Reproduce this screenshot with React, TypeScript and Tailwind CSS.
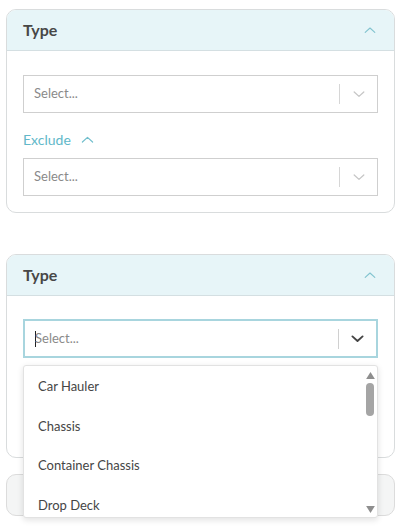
import React from "react";

const font = { fontFamily: "Lato, 'Open Sans', sans-serif" };

function ChevronDown({ className = "", strokeWidth = 1.6 }: { className?: string; strokeWidth?: number }) {
  return (
    <svg viewBox="0 0 20 20" className={className} fill="none" stroke="currentColor" strokeWidth={strokeWidth} strokeLinecap="round" strokeLinejoin="round">
      <path d="M4 7.5 L10 13 L16 7.5" />
    </svg>
  );
}

function ChevronUp({ className = "" }: { className?: string }) {
  return (
    <svg viewBox="0 0 20 20" className={className} fill="none" stroke="currentColor" strokeWidth={1.4} strokeLinecap="round" strokeLinejoin="round">
      <path d="M4 13 L10 7.5 L16 13" />
    </svg>
  );
}

function Select({ focused = false }: { focused?: boolean }) {
  return (
    <div
      className={
        "flex items-center bg-white " +
        (focused ? "h-[39px] border-2 border-[#a8d5de]" : "h-[38px] border border-[#cfcfcf]")
      }
    >
      <div className="flex-1 flex items-center pl-[10px] text-[13px] text-[#8a8a8a]">
        {focused && <span className="w-px h-[16px] bg-[#222] -mr-px" />}
        <span>Select...</span>
      </div>
      <div className={"w-px h-[20px] " + (focused ? "bg-[#d0d0d0]" : "bg-[#d6d6d6]")} />
      <div className="w-[37px] flex items-center justify-center">
        {focused ? (
          <ChevronDown className="w-[17px] h-[17px] text-[#444]" strokeWidth={2.2} />
        ) : (
          <ChevronDown className="w-[16px] h-[16px] text-[#c6c6c6]" strokeWidth={1.6} />
        )}
      </div>
    </div>
  );
}

function Header() {
  return (
    <div className="h-[41px] flex items-center justify-between px-[16px] bg-[#e7f5f8] border-b border-[#d4dfe2] rounded-t-[9px]">
      <span className="text-[16px] font-bold text-[#474747]">Type</span>
      <ChevronUp className="w-[16px] h-[16px] text-[#82c3cf]" />
    </div>
  );
}

export default function App() {
  const items = ["Car Hauler", "Chassis", "Container Chassis", "Drop Deck"];
  return (
    <div className="bg-white w-[401px] h-[532px] overflow-hidden px-[6px] pt-[9px]" style={font}>
      <div className="w-[389px] border border-[#d9dcdd] rounded-[10px] bg-white">
        <Header />
        <div className="px-[16px] pt-[24px] pb-[16px]">
          <Select />
          <div className="flex items-center gap-[8px] h-[45px] pt-[8px] text-[14px] text-[#62b8c9]">
            <span>Exclude</span>
            <ChevronUp className="w-[17px] h-[17px] text-[#72bfcd]" />
          </div>
          <Select />
        </div>
      </div>

      <div className="relative mt-[41px]">
        <div className="w-[389px] border border-[#d9dcdd] rounded-[10px] bg-white h-[204px]">
          <Header />
          <div className="px-[16px] pt-[23px]">
            <Select focused />
          </div>
        </div>

        <div className="mt-[16px] w-[389px] h-[42px] border border-[#dcdcdc] rounded-[10px] bg-[#f4f5f5]" />

        <div className="absolute left-[17px] top-[111px] w-[355px] h-[153px] bg-white border border-[#e2e2e2] rounded-[3px] shadow-[0_2px_6px_rgba(0,0,0,0.12)] flex">
          <div className="flex-1 pt-[1px]">
            {items.map((it) => (
              <div key={it} className="h-[39.5px] flex items-center pl-[14px] text-[13px] text-[#454545]">
                {it}
              </div>
            ))}
          </div>
          <div className="w-[14px] flex flex-col items-center pt-[6px] pb-[4px]">
            <svg viewBox="0 0 10 8" className="w-[9px] h-[7px]"><path d="M5 0 L10 8 L0 8 Z" fill="#8e8e8e" /></svg>
            <div className="mt-[4px] w-[8px] h-[33px] rounded-full bg-[#a5a5a5]" />
            <div className="flex-1" />
            <svg viewBox="0 0 10 8" className="w-[9px] h-[7px]"><path d="M0 0 L10 0 L5 8 Z" fill="#8e8e8e" /></svg>
          </div>
        </div>
      </div>
    </div>
  );
}
